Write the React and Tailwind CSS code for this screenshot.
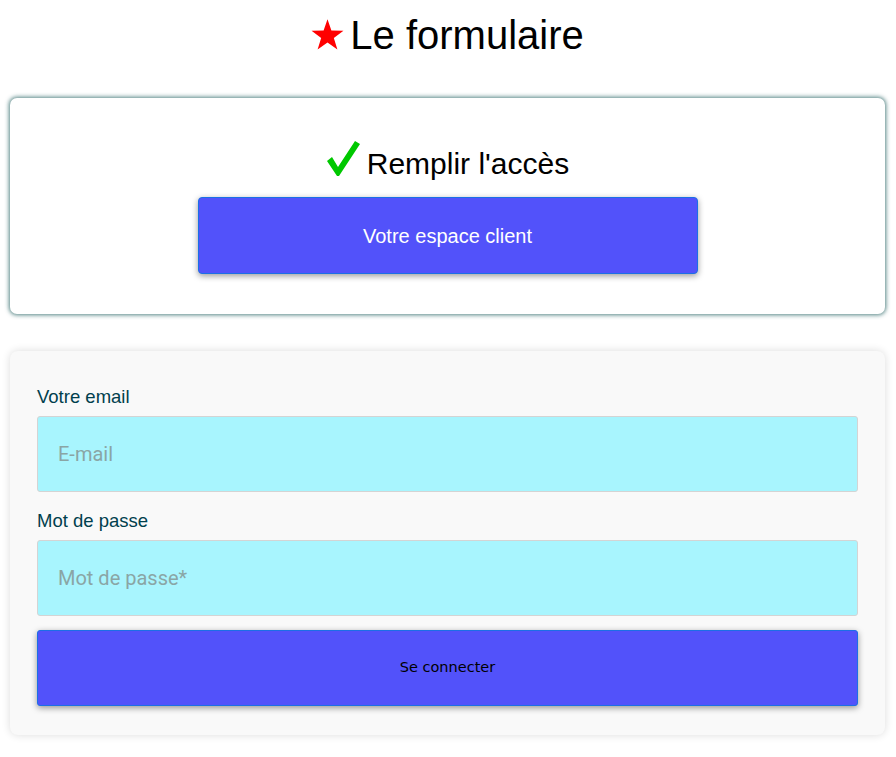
import React from "react";

// Étoile rouge devant le titre
const Star = () => (
  <svg width="33" height="32" viewBox="0 0 24 23" className="shrink-0">
    <path
      d="M12 0 L14.83 8.3 L23.6 8.4 L16.6 13.7 L19.2 22.1 L12 17 L4.8 22.1 L7.4 13.7 L0.4 8.4 L9.17 8.3 Z"
      fill="#ff0000"
    />
  </svg>
);

// Coche verte
const Check = () => (
  <svg width="35" height="38" viewBox="0 0 35 38" className="shrink-0">
    <path d="M1 21 L6 17 L12 27 L29 1 L34 4 L13 36 L11 36 Z" fill="#00c800" />
  </svg>
);

const Field = ({ label, placeholder, type, first }) => (
  <div className={first ? "" : "mt-[18px]"}>
    <label className="block h-[21px] leading-[21px] mb-[9px] text-[18.5px] text-[#00404d]">
      {label}
    </label>
    <input
      type={type}
      placeholder={placeholder}
      className="block w-full h-[76px] px-[20px] bg-[#a8f5fe] border border-[#d4d4d4] rounded-[3px] outline-none text-[20px] placeholder:text-[#8aa5a5]"
      style={{ fontFamily: 'Roboto, sans-serif' }}
    />
  </div>
);

export default function App() {
  return (
    <div
      className="min-h-screen bg-white pl-[10px] pr-[11px] pb-[22px]"
      style={{ fontFamily: '"Liberation Sans", Arial, sans-serif' }}
    >
      {/* Titre */}
      <h1 className="flex items-center justify-center gap-[6px] pt-[12px] text-[40px] leading-[46px] font-normal text-black">
        <Star />
        <span>Le formulaire</span>
      </h1>

      {/* Carte accès */}
      <div className="mt-[40px] bg-white rounded-[7px] shadow-[0_0_4px_1px_rgba(40,100,100,0.8)] pt-[42px] pb-[40px] flex flex-col items-center">
        <div className="flex items-start gap-[6px] h-[38px]">
          <Check />
          <span className="mt-[9px] text-[30px] leading-[30px] text-black">
            Remplir l'accès
          </span>
        </div>
        <button className="mt-[19px] w-[500px] h-[77px] bg-[#5252fa] border border-[#1c6fe6] rounded-[4px] text-white text-[20px] shadow-[0_2px_6px_rgba(0,0,0,0.4)]">
          Votre espace client
        </button>
      </div>

      {/* Formulaire de connexion */}
      <form
        onSubmit={(e) => e.preventDefault()}
        className="mt-[37px] bg-[#f9f9f9] rounded-[8px] shadow-[0_0_8px_rgba(0,0,0,0.14)] pt-[35px] px-[27px] pb-[29px]"
      >
        <Field label="Votre email" placeholder="E-mail" type="email" first />
        <Field label="Mot de passe" placeholder="Mot de passe*" type="password" />
        <button
          type="submit"
          className="mt-[14px] block w-full h-[76px] bg-[#5252fa] border border-[#1c6fe6] rounded-[3px] text-black text-[14.5px] shadow-[0_2px_6px_rgba(0,0,0,0.4)]"
          style={{ fontFamily: '"DejaVu Sans", sans-serif' }}
        >
          Se connecter
        </button>
      </form>
    </div>
  );
}
